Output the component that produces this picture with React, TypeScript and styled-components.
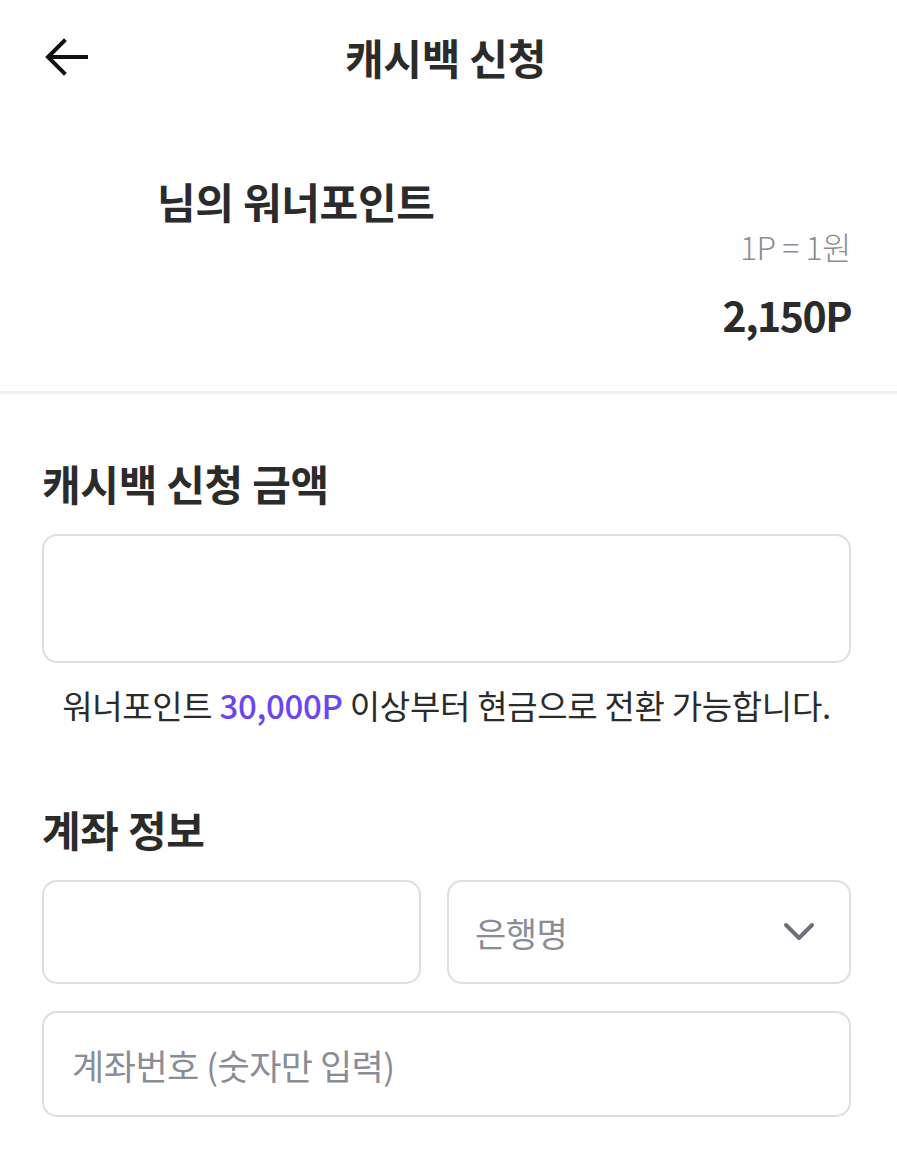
import React from "react";
import styled, { createGlobalStyle } from "styled-components";

const GlobalStyle = createGlobalStyle`
  html, body {
    margin: 0;
    padding: 0;
    background: #ffffff;
  }
  body {
    font-family: "Noto Sans CJK KR", "Noto Sans", sans-serif;
    color: #222222;
  }
  * { box-sizing: border-box; }
`;

const Page = styled.div`
  width: 897px;
  min-height: 1174px;
  background: #ffffff;
  display: flex;
  flex-direction: column;
`;

const Header = styled.header`
  height: 114px;
  display: grid;
  grid-template-columns: 110px 1fr 110px;
  align-items: center;
  padding: 0 0 0 42px;
`;

const BackButton = styled.button`
  width: 54px;
  height: 54px;
  border: none;
  background: transparent;
  padding: 0;
  display: flex;
  align-items: center;
  justify-content: flex-start;
  cursor: pointer;
`;

const HeaderTitle = styled.h1`
  margin: 0;
  text-align: center;
  font-size: 42px;
  font-weight: 700;
  letter-spacing: -0.3px;
  color: #2b2b2b;
  line-height: 50px;
  transform: translateX(-24px);
`;

const PointsSection = styled.section`
  padding: 62px 46px 54px 42px;
  display: flex;
  flex-direction: column;
`;

const PointsTitle = styled.h2`
  margin: 0;
  display: flex;
  font-size: 42px;
  font-weight: 700;
  letter-spacing: -0.3px;
  color: #2b2b2b;
  line-height: 50px;
`;

const NameSlot = styled.span`
  display: inline-block;
  min-width: 115px;
`;

const PointsRight = styled.div`
  display: flex;
  flex-direction: column;
  align-items: flex-end;
`;

const Rate = styled.div`
  font-size: 32px;
  font-weight: 300;
  color: #8a8d96;
  letter-spacing: -0.5px;
  line-height: 40px;
`;

const Amount = styled.div`
  margin-top: 25px;
  font-size: 41px;
  font-weight: 700;
  color: #2b2b2b;
  letter-spacing: -1.5px;
  line-height: 46px;
`;

const Divider = styled.hr`
  margin: 0;
  border: none;
  height: 3px;
  background: #f1f1f1;
`;

const FormSection = styled.section`
  padding: 64px 46px 0 42px;
  display: flex;
  flex-direction: column;
`;

const SectionTitle = styled.h3<{ $gap?: number }>`
  margin: 0 0 ${(p) => p.$gap ?? 26}px 0;
  font-size: 42px;
  font-weight: 700;
  letter-spacing: -0.3px;
  color: #2b2b2b;
  line-height: 50px;
`;

const Field = styled.div<{ $height: number }>`
  height: ${(p) => p.$height}px;
  border: 2px solid #dedede;
  border-radius: 15px;
  background: #ffffff;
  display: flex;
  align-items: center;
  padding: 0 28px;
`;

const TextInput = styled.input`
  flex: 1;
  min-width: 0;
  border: none;
  outline: none;
  background: transparent;
  font-family: "Noto Sans CJK KR", "Noto Sans", sans-serif;
  font-size: 35px;
  font-weight: 400;
  letter-spacing: -0.5px;
  color: #2b2b2b;
  padding: 0;
  &::placeholder {
    color: #8a8d96;
  }
`;

const Helper = styled.p`
  margin: 22px 0 0 0;
  text-align: center;
  font-size: 33px;
  font-weight: 400;
  letter-spacing: -0.3px;
  color: #2b2b2b;
  line-height: 40px;
`;

const Highlight = styled.span`
  color: #6b45f2;
  font-weight: 500;
`;

const AccountSection = styled.section`
  padding: 79px 46px 0 42px;
  display: flex;
  flex-direction: column;
`;

const Row = styled.div`
  display: grid;
  grid-template-columns: 379px 1fr;
  gap: 26px;
  margin-bottom: 27px;
`;

const SelectField = styled.div`
  height: 104px;
  border: 2px solid #dedede;
  border-radius: 15px;
  display: flex;
  align-items: center;
  justify-content: space-between;
  padding: 0 34px 0 26px;
  cursor: pointer;
`;

const SelectLabel = styled.span`
  font-size: 34px;
  font-weight: 400;
  letter-spacing: -0.5px;
  color: #8a8d96;
`;

export default function App() {
  return (
    <>
      <GlobalStyle />
      <Page>
        <Header>
          <BackButton aria-label="back">
            <svg width="48" height="40" viewBox="0 0 48 40" fill="none">
              <path
                d="M44 20H7M22 4L6 20L22 36"
                stroke="#111111"
                strokeWidth="4"
                strokeLinecap="square"
                strokeLinejoin="miter"
              />
            </svg>
          </BackButton>
          <HeaderTitle>캐시백 신청</HeaderTitle>
          <span />
        </Header>

        <PointsSection>
          <PointsTitle>
            <NameSlot />
            님의 워너포인트
          </PointsTitle>
          <PointsRight>
            <Rate>1P = 1원</Rate>
            <Amount>2,150P</Amount>
          </PointsRight>
        </PointsSection>

        <Divider />

        <FormSection>
          <SectionTitle $gap={26}>캐시백 신청 금액</SectionTitle>
          <Field $height={129}>
            <TextInput type="text" />
          </Field>
          <Helper>
            워너포인트 <Highlight>30,000P</Highlight> 이상부터 현금으로 전환 가능합니다.
          </Helper>
        </FormSection>

        <AccountSection>
          <SectionTitle $gap={26}>계좌 정보</SectionTitle>
          <Row>
            <Field $height={104}>
              <TextInput type="text" />
            </Field>
            <SelectField>
              <SelectLabel>은행명</SelectLabel>
              <svg width="32" height="20" viewBox="0 0 32 20" fill="none">
                <path
                  d="M3 3L16 16L29 3"
                  stroke="#6c707b"
                  strokeWidth="4"
                  strokeLinecap="round"
                  strokeLinejoin="round"
                />
              </svg>
            </SelectField>
          </Row>
          <Field $height={106}>
            <TextInput type="text" placeholder="계좌번호 (숫자만 입력)" />
          </Field>
        </AccountSection>
      </Page>
    </>
  );
}
